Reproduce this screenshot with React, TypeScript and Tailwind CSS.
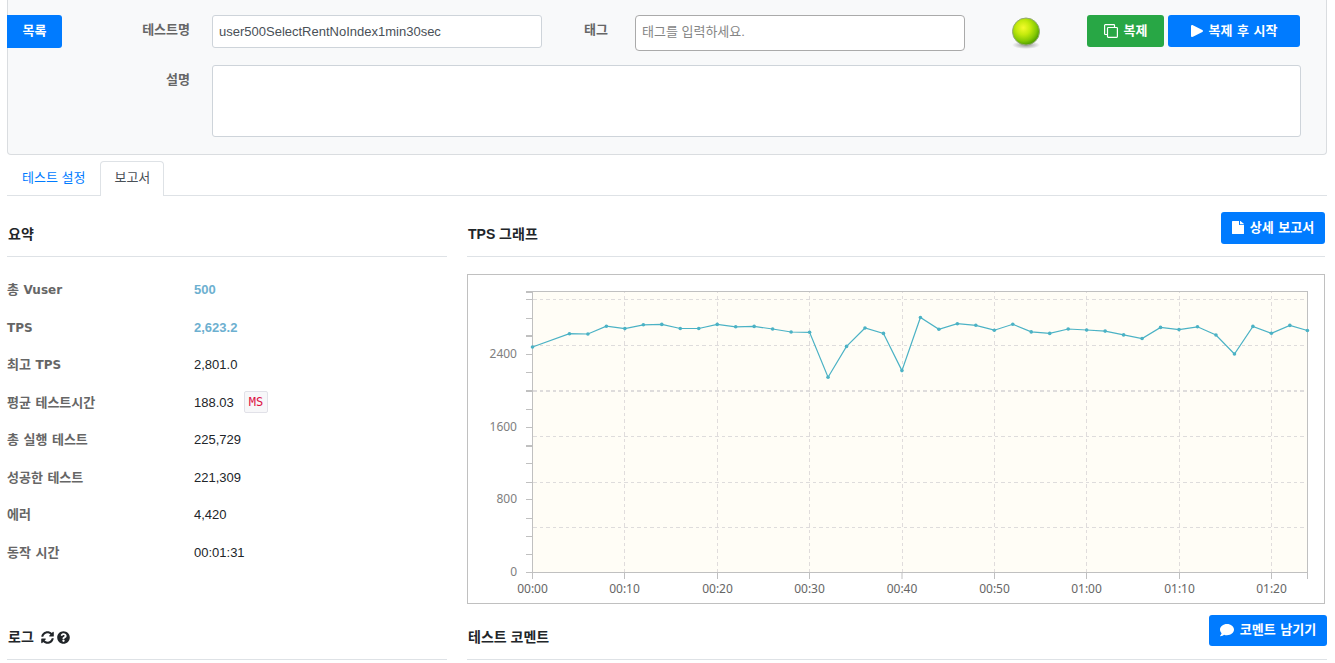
import React from "react";
import { FaComment, FaFile, FaPlay, FaQuestionCircle, FaSyncAlt } from "react-icons/fa";

const samples: [number, number][] = [
  [0, 347], [4, 333.7], [6, 334], [8, 326.2], [10, 328.6], [12, 324.8], [14, 324.4], [16, 328.5], [18, 328.5],
  [20, 324.4], [22, 326.8], [24, 326.4], [26, 329], [28, 332], [30, 332.3], [32, 377.2], [34, 346.4], [36, 328],
  [38, 333.4], [40, 370.6], [42, 317.5], [44, 329.3], [46, 323.7], [48, 325.3], [50, 330.2], [52, 324.3],
  [54, 331.9], [56, 333.4], [58, 329], [60, 330], [62, 331.1], [64, 334.9], [66, 338.5], [68, 327.4], [70, 329.6],
  [72, 326.8], [74, 335], [76, 354], [78, 326.4], [80, 333.3], [82, 325.4], [83.9, 330.5],
];

const px = (second: number) => 532.5 + second * 9.236;

const thinTicks = [299.5, 318.5, 354.5, 372.5, 409.5, 427.5, 463.5, 482.5, 499.5, 518.5, 536.5, 554.5, 572.5];
const thickTicks = [292, 336, 391, 446];
const gridRows = [299.5, 345.5, 436.5, 482.5, 527.5];
const timeMarks: [string, number][] = [
  ["00:00", 532.5], ["00:10", 624.5], ["00:20", 717.5], ["00:30", 809.5], ["00:40", 902],
  ["00:50", 994.5], ["01:00", 1086.5], ["01:10", 1179.5], ["01:20", 1271.5],
];
const levelMarks: [string, number][] = [["2400", 354], ["1600", 427], ["800", 499], ["0", 572]];

function TpsChart() {
  return (
    <svg viewBox="468 275 856 328" className="block w-full" role="img" aria-label="TPS 그래프">
      <rect x="532.5" y="291.5" width="775" height="281" fill="#fffdf6" />
      <g stroke="#dedcdc" strokeDasharray="3.5 3" fill="none" shapeRendering="crispEdges">
        {gridRows.map((y) => <path key={y} d={`M533 ${y}H1307`} />)}
        <path d="M533 391H1307" strokeWidth="2" />
        {timeMarks.slice(1).map(([t, x]) => (
          <path key={t} d={`M${x} 572V292`} stroke="#e0dcdc" />
        ))}
      </g>
      <g stroke="#c0c0c0" fill="none">
        <rect x="532.5" y="291.5" width="775" height="281" />
        {thinTicks.map((y) => <path key={y} d={`M526 ${y}H532`} />)}
        {thickTicks.map((y) => <path key={y} d={`M526 ${y}H532`} strokeWidth="2" />)}
        {timeMarks.map(([t, x]) => <path key={t} d={`M${x} 573V579`} />)}
        <path d="M1307.5 573V579" />
      </g>
      <polyline
        fill="none"
        stroke="#4bb2c5"
        strokeWidth="1.2"
        points={samples.map(([t, y]) => `${px(t)},${y}`).join(" ")}
      />
      {samples.map(([t, y]) => <circle key={t} cx={px(t)} cy={y} r="1.8" fill="#4bb2c5" />)}
      <g className="font-['Noto_Sans',sans-serif] text-[12px]" fill="#666666">
        {timeMarks.map(([t, x]) => <text key={t} x={x} y="593" textAnchor="middle">{t}</text>)}
      </g>
      <g className="font-['Noto_Sans',sans-serif] text-[12px]" fill="#808080">
        {levelMarks.map(([t, y]) => <text key={t} x="517" y={y + 4} textAnchor="end">{t}</text>)}
      </g>
    </svg>
  );
}

function StatusBall() {
  return (
    <svg viewBox="0 0 30 34" className="h-[34px] w-[30px]" role="img" aria-label="완료">
      <defs>
        <radialGradient id="ball" cx="0.4" cy="0.36" r="0.66">
          <stop offset="0" stopColor="#f4fb2c" />
          <stop offset="0.4" stopColor="#c4ea0c" />
          <stop offset="0.75" stopColor="#84c904" />
          <stop offset="1" stopColor="#4a9a00" />
        </radialGradient>
        <radialGradient id="shade">
          <stop offset="0" stopColor="#000" stopOpacity="0.4" />
          <stop offset="1" stopColor="#000" stopOpacity="0" />
        </radialGradient>
      </defs>
      <ellipse cx="15" cy="29" rx="14" ry="4" fill="url(#shade)" />
      <circle cx="15" cy="15.5" r="13.5" fill="url(#ball)" stroke="#93a874" strokeWidth="1" />
    </svg>
  );
}

function CloneIcon() {
  return (
    <svg viewBox="0 0 14 14" className="size-[14px]" fill="none" stroke="currentColor" strokeWidth="1.2" aria-hidden="true">
      <rect x="3.5" y="3.5" width="9.9" height="9.9" rx="0.8" />
      <path d="M3.5 10.5H1.3a.7.7 0 0 1-.7-.7V1.3a.7.7 0 0 1 .7-.7H9.8a.7.7 0 0 1 .7.7V3.5" />
    </svg>
  );
}

const button =
  "flex items-center justify-center gap-[6px] rounded-[3px] pb-px font-['DejaVu_Sans','Noto_Sans_CJK_KR',sans-serif] text-[13px] font-bold text-white";
const label = "text-right text-[13px] font-bold leading-[30px] text-[#666]";
const heading = "flex items-center pl-px text-[14px] font-bold text-[#212529]";

function Latin({ children }: { children: React.ReactNode }) {
  return <span className="text-[12px]">{children}</span>;
}

const rows: { name: React.ReactNode; value: string; accent?: boolean; unit?: string }[] = [
  { name: <>총 <Latin>Vuser</Latin></>, value: "500", accent: true },
  { name: <Latin>TPS</Latin>, value: "2,623.2", accent: true },
  { name: <>최고 <Latin>TPS</Latin></>, value: "2,801.0" },
  { name: "평균 테스트시간", value: "188.03", unit: "MS" },
  { name: "총 실행 테스트", value: "225,729" },
  { name: "성공한 테스트", value: "221,309" },
  { name: "에러", value: "4,420" },
  { name: "동작 시간", value: "00:01:31" },
];

export default function App() {
  return (
    <div className="pr-2 pl-[7px] font-['Liberation_Sans','Noto_Sans_CJK_KR',sans-serif] text-[13px] text-[#212529]">
      <form className="flex rounded-b-[4px] border border-t-0 border-[#dadde0] bg-[#f8f9fa] pt-[15px] pr-[25px] pb-[17px]">
        <button type="button" className={`${button} -ml-px h-[33px] w-[55px] rounded-l-none bg-[#007bff]`}>목록</button>
        <div className="grid flex-1 grid-cols-[128px_1fr] gap-x-[22px] gap-y-[14px]">
          <label htmlFor="name" className={label}>테스트명</label>
          <div className="flex h-[36px] items-start">
            <input
              id="name"
              defaultValue="user500SelectRentNoIndex1min30sec"
              className="h-[33px] min-w-0 flex-1 rounded-[3px] border border-[#ced4da] bg-white px-[6px] text-[13px] text-[#495057]"
            />
            <label htmlFor="tag" className={`${label} w-[66px]`}>태그</label>
            <input
              id="tag"
              placeholder="태그를 입력하세요."
              className="ml-[27px] h-[36px] min-w-0 flex-1 rounded-[4px] border border-[#aaa] bg-white px-[6px] pb-[3px] text-[13px] placeholder:text-[#858585]"
            />
            <div className="mx-[46px] pt-px"><StatusBall /></div>
            <div className="mr-px flex gap-1">
              <button type="button" className={`${button} h-[32px] w-[77px] bg-[#28a745]`}><CloneIcon />복제</button>
              <button type="button" className={`${button} h-[32px] w-[132px] bg-[#007bff]`}>
                <FaPlay className="h-[12px] w-[12px]" preserveAspectRatio="none" />복제 후 시작
              </button>
            </div>
          </div>
          <label htmlFor="memo" className={label}>설명</label>
          <textarea id="memo" className="block h-[72px] w-full resize-none rounded-[3px] border border-[#ced4da] bg-white p-2" />
        </div>
      </form>

      <nav className="mt-[6px] flex h-[35px] border-b border-[#dee2e6]">
        <a href="#config" className="px-[15px] leading-[33px] text-[#007bff]">테스트 설정</a>
        <a href="#report" className="h-[35px] rounded-t-[4px] border border-b-0 border-[#dee2e6] bg-white px-[13px] leading-[31px] text-[#495057]">보고서</a>
      </nav>

      <main className="flex">
        <div className="w-1/3">
          <h2 className={`${heading} h-[61px] border-b border-[#dee2e6] pt-[17px]`}>요약</h2>
          <dl className="mt-[14px] grid h-[300px] grid-rows-8">
            {rows.map((row) => (
              <div key={row.value} className="flex items-center">
                <dt className="w-[187px] font-['DejaVu_Sans','Noto_Sans_CJK_KR',sans-serif] font-bold text-[#666]">{row.name}</dt>
                <dd className={row.accent ? "font-bold text-[#6db0d0]" : "flex items-center"}>
                  {row.value}
                  {row.unit && (
                    <code className="ml-[10px] rounded-[2px] border border-[#e1e1e8] bg-[#f7f7f9] px-[4px] font-['DejaVu_Sans_Mono',monospace] text-[12px] leading-[20px] text-[#dd1144]">
                      {row.unit}
                    </code>
                  )}
                </dd>
              </div>
            ))}
          </dl>
          <h2 className={`${heading} mt-[33px] h-[56px] gap-[3px] border-b border-[#dee2e6] pt-[11px]`}>
            <span className="mr-1">로그</span>
            <button type="button" aria-label="새로 고침"><FaSyncAlt className="size-[13px]" /></button>
            <button type="button" aria-label="도움말"><FaQuestionCircle className="size-[13px]" /></button>
          </h2>
        </div>
        <div className="flex-1 pl-5">
          <div className="mr-[2px]">
            <div className="flex h-[61px] justify-between border-b border-[#dee2e6]">
              <h2 className={`${heading} pt-[17px]`}>TPS 그래프</h2>
              <button type="button" className={`${button} mt-[16px] h-[32px] w-[104px] bg-[#007bff]`}>
                <FaFile className="h-[13px] w-[12px]" preserveAspectRatio="none" />상세 보고서
              </button>
            </div>
            <div className="mt-[17px] border border-[#c0c0c0]"><TpsChart /></div>
          </div>
          <div className="flex h-[56px] justify-between border-b border-[#dee2e6]">
            <h2 className={`${heading} pt-[11px]`}>테스트 코멘트</h2>
            <button type="button" className={`${button} mt-[11px] h-[31px] w-[118px] bg-[#007bff]`}>
              <FaComment className="size-[14px]" />코멘트 남기기
            </button>
          </div>
        </div>
      </main>
    </div>
  );
}
